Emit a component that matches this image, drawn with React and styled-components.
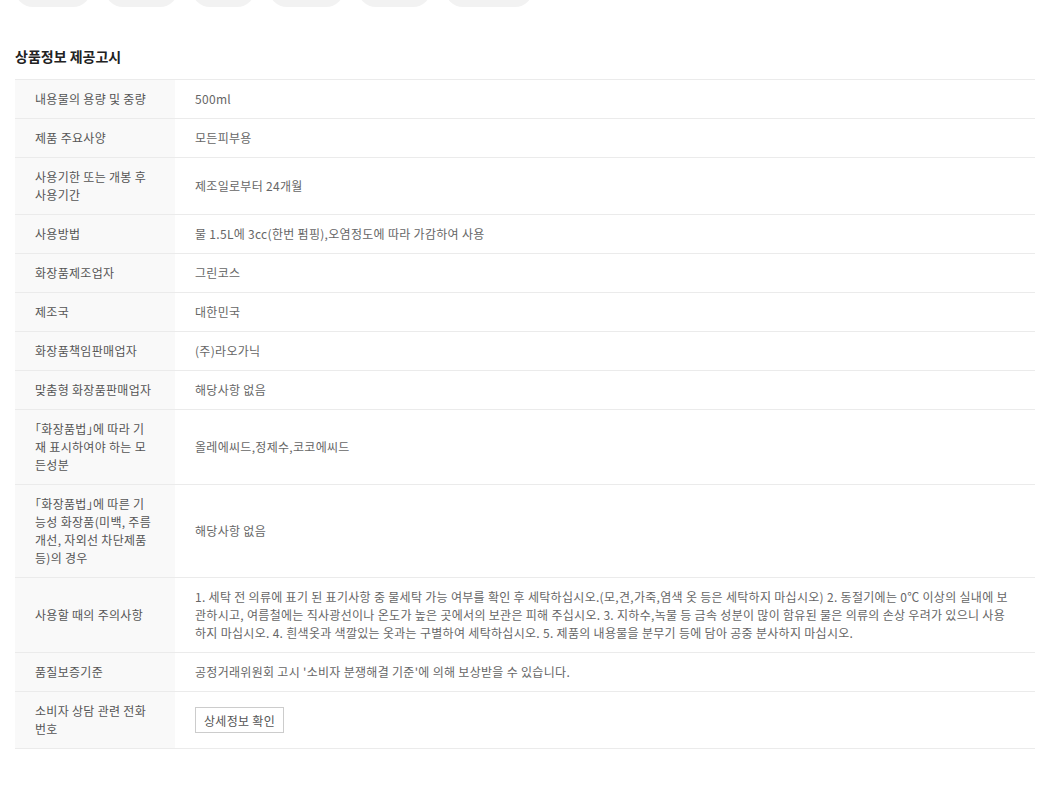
import React from 'react';
import styled, { createGlobalStyle } from 'styled-components';

const GlobalStyle = createGlobalStyle`
  body {
    margin: 0;
    background: #fff;
    font-family: "Noto Sans CJK KR", "Noto Sans", sans-serif;
  }
`;

const pills = [76, 73, 63, 75, 73, 88];

const rows = [
  ['내용물의 용량 및 중량', '500ml'],
  ['제품 주요사양', '모든피부용'],
  ['사용기한 또는 개봉 후 사용기간', '제조일로부터 24개월'],
  ['사용방법', '물 1.5L에 3cc(한번 펌핑),오염정도에 따라 가감하여 사용'],
  ['화장품제조업자', '그린코스'],
  ['제조국', '대한민국'],
  ['화장품책임판매업자', '(주)라오가닉'],
  ['맞춤형 화장품판매업자', '해당사항 없음'],
  ['「화장품법」에 따라 기재 표시하여야 하는 모든성분', '올레에씨드,정제수,코코에씨드'],
  ['「화장품법」에 따른 기능성 화장품(미백, 주름개선, 자외선 차단제품 등)의 경우', '해당사항 없음'],
  [
    '사용할 때의 주의사항',
    '1. 세탁 전 의류에 표기 된 표기사항 중 물세탁 가능 여부를 확인 후 세탁하십시오.(모,견,가죽,염색 옷 등은 세탁하지 마십시오) 2. 동절기에는 0℃ 이상의 실내에 보관하시고, 여름철에는 직사광선이나 온도가 높은 곳에서의 보관은 피해 주십시오. 3. 지하수,녹물 등 금속 성분이 많이 함유된 물은 의류의 손상 우려가 있으니 사용하지 마십시오. 4. 흰색옷과 색깔있는 옷과는 구별하여 세탁하십시오. 5. 제품의 내용물을 분무기 등에 담아 공중 분사하지 마십시오.',
  ],
  ['품질보증기준', "공정거래위원회 고시 '소비자 분쟁해결 기준'에 의해 보상받을 수 있습니다."],
];

const App = () => (
  <>
    <GlobalStyle />
    <Page>
      <PillRow>
        {pills.map((w, i) => (
          <Pill key={i} $w={w} />
        ))}
      </PillRow>
      <Title>상품정보 제공고시</Title>
      <InfoTable>
        <tbody>
          {rows.map(([label, value]) => (
            <tr key={label}>
              <Label>{label}</Label>
              <Value>{value}</Value>
            </tr>
          ))}
          <tr>
            <Label>소비자 상담 관련 전화번호</Label>
            <Value>
              <DetailButton type="button">상세정보 확인</DetailButton>
            </Value>
          </tr>
        </tbody>
      </InfoTable>
    </Page>
  </>
);

const Page = styled.div`
  padding: 0 21px 40px 15px;
`;

const PillRow = styled.div`
  display: flex;
  gap: 14px;
  margin-top: -30px;
`;

const Pill = styled.div`
  width: ${(p) => p.$w}px;
  height: 37px;
  border-radius: 18px;
  background: #f2f2f2;
`;

const Title = styled.h3`
  margin: 40px 0 14px;
  font-size: 14px;
  line-height: 18px;
  font-weight: 700;
  color: #222;
`;

const InfoTable = styled.table`
  width: 100%;
  border-collapse: collapse;
  border-top: 1px solid #ebebeb;
  font-size: 12px;
  line-height: 18px;
  letter-spacing: 0.3px;
`;

const Label = styled.th`
  width: 120px;
  padding: 10px 20px;
  background: #f9f9f9;
  border-bottom: 1px solid #ebebeb;
  text-align: left;
  font-weight: 400;
  color: #555;
  vertical-align: middle;
  word-break: break-all;
  font-feature-settings: "halt";
`;

const Value = styled.td`
  padding: 10px 20px;
  border-bottom: 1px solid #ebebeb;
  color: #666;
  vertical-align: middle;
  word-break: break-all;
`;

const DetailButton = styled.button`
  display: inline-block;
  height: 26px;
  padding: 0 8px;
  border: 1px solid #ccc;
  background: #fff;
  color: #555;
  font-family: inherit;
  font-size: 12px;
  letter-spacing: 0.3px;
  vertical-align: middle;
  cursor: pointer;
`;

export default App;
